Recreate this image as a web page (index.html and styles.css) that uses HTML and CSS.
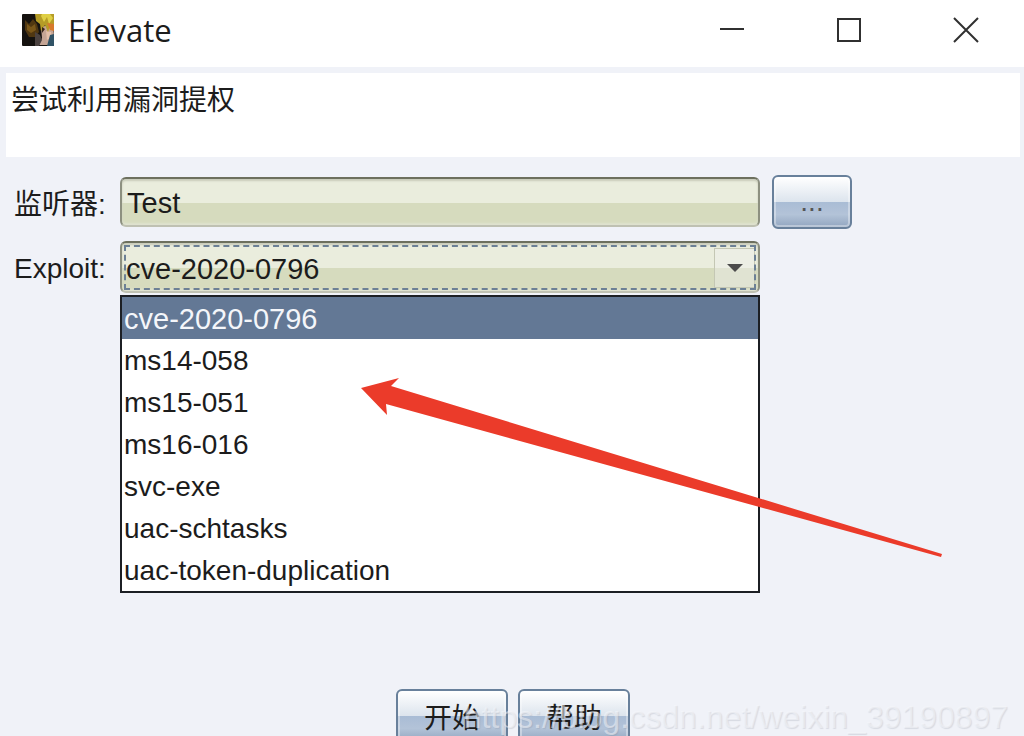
FILE: index.html
```
<!DOCTYPE html>
<html lang="zh-CN">
<head>
    <meta charset="UTF-8">
    <meta name="viewport" content="width=device-width, initial-scale=1.0">
    <title>Elevate</title>
    <link rel="stylesheet" href="styles.css">
</head>
<body>
    <header class="titlebar">
        <svg class="app-icon" viewBox="0 0 32 32" aria-hidden="true">
            <rect width="32" height="32" rx="1" fill="#15120f"/>
            <path d="M3 6l4 4 4-5 4 5 2 8-4 5H7l-4-7z" fill="#503711"/>
            <path d="M5 10l4 3 4-3 1 6-5 3-4-3z" fill="#7a5719"/>
            <path d="M19 13l12-3 1 12-4 9H17l3-7z" fill="#c5a595"/>
            <path d="M24 17l5 1 1 5-5 3z" fill="#e3bfa9"/>
            <path d="M13 0h19v14l-4-2-2 6-3-7-4 6-1-7-4-3z" fill="#b59c27"/>
            <path d="M19 2l3 6 3-5 2 7 4-6-3-4h-8z" fill="#dfcf45"/>
            <path d="M25 9l7 1v7l-4-1z" fill="#d7792b"/>
            <path d="M28 21l4-1v12h-7z" fill="#315366"/>
            <path d="M13 18l5 3 2 5-3 6h-4z" fill="#4b4240"/>
            <path d="M20 13l3 2-3 4z" fill="#382619"/>
        </svg>
        <h1>Elevate</h1>
        <div class="window-controls">
            <button type="button" aria-label="Minimize">
                <svg viewBox="0 0 26 26"><path d="M1 12h24"/></svg>
            </button>
            <button type="button" aria-label="Maximize">
                <svg viewBox="0 0 26 26"><path d="M2 2h22v22H2z"/></svg>
            </button>
            <button type="button" aria-label="Close">
                <svg viewBox="0 0 26 26"><path d="M1 1l24 24M25 1L1 25"/></svg>
            </button>
        </div>
    </header>

    <main>
        <p class="description">尝试利用漏洞提权</p>

        <form class="options">
            <div class="row">
                <label for="listener">监听器:</label>
                <input class="field" id="listener" type="text" value="Test">
                <button class="btn btn-more" type="button">...</button>
            </div>
            <div class="row">
                <label for="exploit">Exploit:</label>
                <div class="combo">
                    <select class="field" id="exploit">
                        <option>cve-2020-0796</option>
                    </select>
                    <span class="combo-arrow"></span>
                    <ul class="combo-list" role="listbox" aria-label="Exploit">
                        <li role="option" class="selected" aria-selected="true">cve-2020-0796</li>
                        <li role="option">ms14-058</li>
                        <li role="option">ms15-051</li>
                        <li role="option">ms16-016</li>
                        <li role="option">svc-exe</li>
                        <li role="option">uac-schtasks</li>
                        <li role="option">uac-token-duplication</li>
                    </ul>
                </div>
            </div>
        </form>

        <div class="actions">
            <button class="btn" type="button">开始</button>
            <button class="btn" type="button">帮助</button>
        </div>
    </main>

    <!-- annotation arrow over the list -->
    <svg class="pointer" viewBox="0 0 582 180" aria-hidden="true">
        <path d="M0 10L38 0 30 8 581 176 580 179 25 26 26 37z" fill="#eb3b2a"/>
    </svg>
    <div class="watermark">https://blog.csdn.net/weixin_39190897</div>
</body>
</html>
```
FILE: styles.css
```
* {
    box-sizing: border-box;
}
body {
    margin: 0;
    position: relative;
    height: 100vh;
    overflow: hidden;
    background-color: #f0f2f8;
    color: #1c1c1c;
    font-family: "Liberation Sans", "Noto Sans CJK SC", Arial, sans-serif;
    font-size: 28px;
}
button, input, select {
    font: inherit;
    color: inherit;
}
.titlebar {
    display: flex;
    align-items: center;
    height: 67px;
    padding: 0 0 8px 22px;
    background-color: #fff;
}
.app-icon {
    width: 32px;
    height: 32px;
    margin-right: 14px;
}
.titlebar h1 {
    margin: 0;
    font-family: "Open Sans", "Noto Sans", sans-serif;
    font-size: 31px;
    font-weight: normal;
}
.window-controls {
    display: flex;
    margin-left: auto;
}
.window-controls button {
    display: flex;
    align-items: center;
    justify-content: center;
    width: 117px;
    height: 58px;
    padding: 0;
    border: none;
    background: none;
}
.window-controls svg {
    width: 26px;
    height: 26px;
    fill: none;
    stroke: #303030;
    stroke-width: 2;
}
.description {
    height: 84px;
    margin: 6px 4px 0 6px;
    padding: 8px 5px;
    background-color: #fff;
    line-height: 40px;
}
.options {
    padding: 18px 172px 0 14px;
}
.row {
    display: flex;
    align-items: center;
    height: 54px;
    margin-bottom: 11px;
}
.row label {
    width: 106px;
}
.row label[for="exploit"] {
    padding-top: 4px;
}
.field {
    flex: 1;
    width: 100%;
    min-width: 0;
    height: 50px;
    padding: 2px 5px 0;
    border: 2px solid #8d9080;
    border-top-color: #6d705e;
    border-bottom-color: #bfc1b2;
    border-radius: 6px;
    outline: none;
    background: linear-gradient(#eaeddd 52%, #d6dbbe 52%);
    box-shadow: inset 0 2px 2px #c9ccba, inset 0 -2px 2px #dfe2cf;
    font-size: 29px;
}
.btn {
    width: 112px;
    height: 54px;
    padding: 0;
    border: 2px solid #68809b;
    border-radius: 6px;
    background: linear-gradient(#fff, #dce4ed 50%, #a9bcd5 50%, #b3c3d8 75%, #92a6c0);
    box-shadow: inset 0 0 0 2px rgba(255, 255, 255, 0.35);
}
.btn-more {
    width: 80px;
    margin-left: 12px;
    color: #555;
}
.combo {
    position: relative;
    flex: 1;
    margin-right: 92px;
}
.combo select {
    display: block;
    height: 52px;
    padding: 4px 4px 0;
    appearance: none;
}
.combo::after {
    content: "";
    position: absolute;
    inset: 4px 4px 3px;
    border: 2px dashed #6c8095;
    pointer-events: none;
}
.combo-arrow {
    position: absolute;
    top: 7px;
    right: 5px;
    display: flex;
    align-items: center;
    justify-content: center;
    width: 41px;
    height: 40px;
    border: 1px solid #c4c7b4;
    background-color: rgba(240, 240, 240, 0.4);
    pointer-events: none;
}
.combo-arrow::before {
    content: "";
    border: 8px solid transparent;
    border-top-color: #4c4c4c;
    border-bottom: none;
}
.combo-list {
    position: absolute;
    top: 54px;
    left: 0;
    right: 0;
    z-index: 1;
    margin: 0;
    padding: 0;
    border: 2px solid #1c1f24;
    background-color: #fff;
    list-style: none;
}
.combo-list li {
    height: 42px;
    padding: 0 2px;
    line-height: 44px;
}
.combo-list .selected {
    background-color: #637895;
    color: #f4f6fa;
    font-size: 29px;
}
.actions {
    display: flex;
    justify-content: center;
    gap: 10px;
    margin-top: 395px;
    padding-left: 2px;
}
.pointer {
    position: absolute;
    top: 378px;
    left: 361px;
    z-index: 2;
    width: 582px;
    height: 180px;
}
.watermark {
    position: absolute;
    right: 16px;
    bottom: 0;
    color: rgba(248, 249, 252, 0.5);
    font-size: 32px;
    line-height: 38px;
    text-shadow: 1px 1px 1px rgba(120, 125, 140, 0.2);
    pointer-events: none;
}
```
